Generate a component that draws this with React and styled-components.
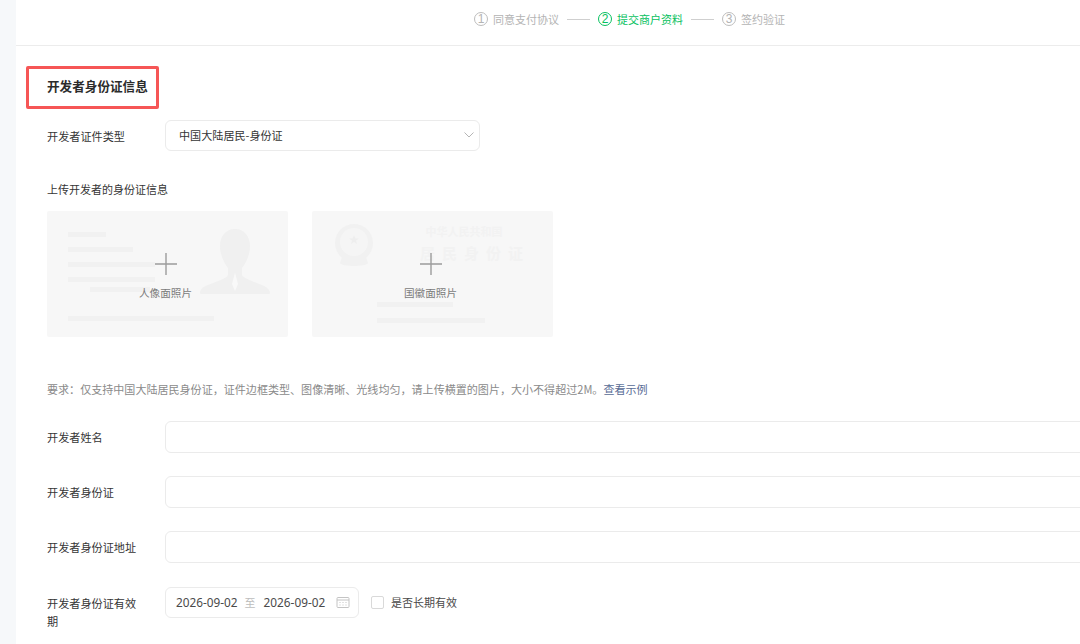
import React from "react";
import styled, { createGlobalStyle } from "styled-components";

const Global = createGlobalStyle`
  html, body { margin: 0; padding: 0; background: #fff; height: 644px; overflow: hidden; }
  * { box-sizing: border-box; }
  body { font-family: "Noto Sans CJK SC", "Liberation Sans", sans-serif; color: #333; }
`;

const Page = styled.div`
  display: flex;
  width: 1080px;
  height: 644px;
  overflow: hidden;
`;
const Rail = styled.div`
  width: 16px;
  flex: none;
  background: #f6f8fa;
`;
const Main = styled.div`
  flex: 1;
  min-width: 0;
`;
const Header = styled.div`
  height: 46px;
  border-bottom: 1px solid #ececec;
  display: flex;
  align-items: center;
  padding: 0 0 7px 458px;
  gap: 8px;
`;
const Step = styled.div`
  display: flex;
  align-items: center;
  gap: 5px;
  font-size: 11px;
  color: ${(p) => (p.$active ? "#07c160" : "#b4b4b4")};
`;
const StepNum = styled.span`
  width: 14px;
  height: 14px;
  border-radius: 50%;
  border: 1px solid ${(p) => (p.$active ? "#07c160" : "#bdbdbd")};
  font-family: "Liberation Sans", sans-serif;
  font-size: 12px;
  display: flex;
  align-items: center;
  justify-content: center;
`;
const StepLine = styled.span`
  width: 23px;
  height: 1px;
  background: #cfcfcf;
`;
const Content = styled.div`
  padding: 20px 0 0 31px;
`;
const TitleWrap = styled.div`
  margin-left: -21px;
  width: 133px;
  height: 43px;
  border: 3px solid #f65656;
  border-radius: 2px;
  display: flex;
  align-items: center;
  padding: 0 0 4px 18px;
`;
const Title = styled.h2`
  margin: 0;
  font-size: 12.6px;
  font-weight: 700;
  color: #2b2b2b;
  white-space: nowrap;
`;
const Row = styled.div`
  display: flex;
  align-items: ${(p) => (p.$top ? "flex-start" : "center")};
  margin-top: ${(p) => p.$mt || 0}px;
`;
const Label = styled.label`
  width: 118px;
  flex: none;
  font-size: 11.15px;
  line-height: 18px;
  color: #353535;
  padding: ${(p) => (p.$top ? "7px" : "0")} 20px 0 0;
`;
const Field = styled.div`
  height: ${(p) => p.$h || 32}px;
  width: ${(p) => p.$w || "auto"};
  flex: ${(p) => (p.$w ? "none" : 1)};
  margin-right: ${(p) => (p.$w ? "0" : "-20px")};
  border: 1px solid #ebebeb;
  border-radius: 6px;
  background: #fff;
  display: flex;
  align-items: center;
  font-size: 11.1px;
  color: #353535;
  padding: 0 ${(p) => p.$pr || 8}px 1px ${(p) => p.$pl || 13}px;
`;
const Grow = styled.span`
  flex: 1;
`;
const Sub = styled.div`
  margin-top: 30px;
  font-size: 11px;
  line-height: 16px;
  color: #353535;
`;
const Uploads = styled.div`
  display: flex;
  gap: 24px;
  margin-top: 14px;
`;
const Card = styled.div`
  position: relative;
  width: 241px;
  height: 126px;
  background: #f7f7f7;
  border-radius: 2px;
  display: flex;
  flex-direction: column;
  align-items: center;
  padding: 41px 4px 0 0;
`;
const CardArt = styled.svg`
  position: absolute;
  inset: 0;
`;
const CardLabel = styled.span`
  position: relative;
  margin-top: 9px;
  font-size: 10.6px;
  line-height: 16px;
  color: #7b7b7b;
`;
const Plus = styled.svg`
  position: relative;
`;
const Hint = styled.div`
  margin-top: 44px;
  font-size: 11.05px;
  line-height: 16px;
  color: #8a8a8a;
  white-space: nowrap;
`;
const HintLink = styled.a`
  color: #576b95;
`;
const DateText = styled.span`
  font-family: "Noto Sans", "Liberation Sans", sans-serif;
  font-size: 11.8px;
  color: #4a4a4a;
`;
const DateSep = styled.span`
  margin: 0 8px 0 7px;
  font-size: 11px;
  color: #bdbdbd;
`;
const Check = styled.label`
  display: flex;
  align-items: center;
  gap: 7px;
  margin: 8px 0 0 12px;
  font-size: 11px;
  line-height: 15px;
  color: #4a4a4a;
`;
const Box = styled.span`
  width: 13px;
  height: 13px;
  border: 1px solid #d9d9d9;
  border-radius: 2px;
  background: #fff;
`;
const Arrow = styled.svg`
  color: #b5b5b5;
  margin-right: -3px;
`;

const Bars = ({ items }) =>
  items.map(([x, y, w], i) => <rect key={i} x={x} y={y} width={w} height={5} fill="#f1f1f1" />);

const PlusIcon = () => (
  <Plus width="24" height="24" viewBox="0 0 24 24">
    <path d="M12 1v22M1 12h22" stroke="#9c9c9c" strokeWidth="1.4" fill="none" />
  </Plus>
);

const PortraitArt = () => (
  <CardArt width="241" height="126" viewBox="0 0 241 126">
    <Bars items={[[21, 21, 38], [21, 36, 65], [21, 51, 87], [21, 66, 87], [43, 76, 60], [21, 105, 146]]} />
    <path
      d="M188 18c-9 0-15 7-15 17 0 9 4 17 8 22v7c-1 3-12 7-20 10-6 2-8 5-8 8 0 1 1 1 3 1h64c2 0 3 0 3-1 0-3-3-6-8-8-8-3-19-7-20-10v-7c4-5 8-13 8-22 0-10-6-17-15-17z"
      fill="#f0f0f0"
    />
    <path d="M188 62l-3 11 3 7 3-7z" fill="#f9f9f9" />
  </CardArt>
);

const EmblemArt = () => (
  <CardArt width="241" height="126" viewBox="0 0 241 126">
    <circle cx="42" cy="32" r="19" fill="#f1f1f1" />
    <circle cx="42" cy="31" r="14" fill="#f5f5f5" />
    <path d="M42 24l1.500 3.500h3.500l-3 2 1 3.500-3-2-3 2 1-3.500-3-2h3.500z" fill="#eeeeee" />
    <path d="M30 46h24l2 6c-1 4-27 4-28 0z" fill="#f1f1f1" />
    <text x="152" y="25" fontSize="11" textAnchor="middle" fill="#f2f2f2" fontFamily="'Noto Sans CJK SC',serif" fontWeight="700">中华人民共和国</text>
    <text x="108" y="48" fontSize="15" letterSpacing="7" fill="#f2f2f2" fontFamily="'Noto Sans CJK SC',serif" fontWeight="700">居民身份证</text>
    <Bars items={[[65, 91, 76], [65, 107, 108]]} />
  </CardArt>
);

const Calendar = () => (
  <svg width="14" height="12" viewBox="0 0 14 12" fill="none" stroke="#c4c4c4" strokeWidth="1">
    <rect x="1" y="1.500" width="12" height="10" rx="1" />
    <path d="M1 4h12M3.500 6.500h1M6.500 6.500h1M9.500 6.500h1M3.500 9h1M6.500 9h1M9.500 9h1" />
  </svg>
);

export default function App() {
  return (
    <Page>
      <Global />
      <Rail />
      <Main>
        <Header>
          <Step><StepNum>1</StepNum>同意支付协议</Step>
          <StepLine />
          <Step $active><StepNum $active>2</StepNum>提交商户资料</Step>
          <StepLine />
          <Step><StepNum>3</StepNum>签约验证</Step>
        </Header>
        <Content>
          <TitleWrap><Title>开发者身份证信息</Title></TitleWrap>
          <Row $mt={11}>
            <Label>开发者证件类型</Label>
            <Field $w="315px" $h={31}>
              <Grow>中国大陆居民-身份证</Grow>
              <Arrow width="10" height="6" viewBox="0 0 10 6" fill="none" stroke="currentColor">
                <path d="M.5.500 5 5 9.500.500" />
              </Arrow>
            </Field>
          </Row>
          <Sub>上传开发者的身份证信息</Sub>
          <Uploads>
            <Card><PortraitArt /><PlusIcon /><CardLabel>人像面照片</CardLabel></Card>
            <Card><EmblemArt /><PlusIcon /><CardLabel>国徽面照片</CardLabel></Card>
          </Uploads>
          <Hint>要求：仅支持中国大陆居民身份证，证件边框类型、图像清晰、光线均匀，请上传横置的图片，大小不得超过2M。<HintLink>查看示例</HintLink></Hint>
          <Row $mt={24}><Label>开发者姓名</Label><Field /></Row>
          <Row $mt={23}><Label>开发者身份证</Label><Field /></Row>
          <Row $mt={23}><Label>开发者身份证地址</Label><Field /></Row>
          <Row $mt={24} $top>
            <Label $top>开发者身份证有效期</Label>
            <Field $w="194px" $h={31} $pl={10}>
              <DateText>2026-09-02</DateText>
              <DateSep>至</DateSep>
              <DateText>2026-09-02</DateText>
              <Grow />
              <Calendar />
            </Field>
            <Check><Box />是否长期有效</Check>
          </Row>
        </Content>
      </Main>
    </Page>
  );
}
